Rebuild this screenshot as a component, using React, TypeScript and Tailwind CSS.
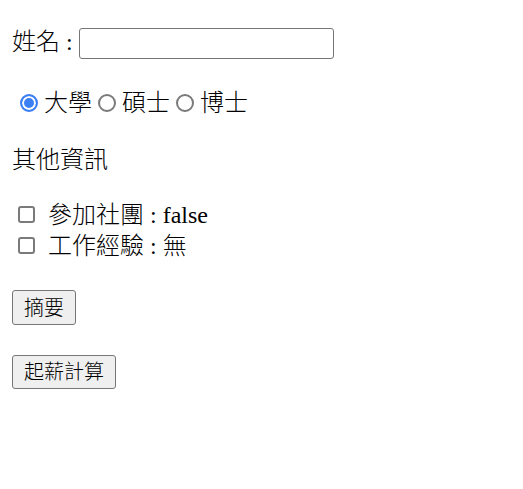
const App = () => {
  const font = 'font-["Liberation_Serif","Noto_Sans_CJK_TC",serif]';
  const radio =
    "h-[18px] w-[18px] appearance-none rounded-full border-2 border-[#7a7a7a] bg-white checked:border-[#3b7ff5] checked:bg-[#3b7ff5] checked:shadow-[inset_0_0_0_2px_white]";
  const checkbox = "ml-[6px] mr-[13px] h-[17px] w-[17px] appearance-none rounded-[3px] border-2 border-[#7a7a7a] bg-white";

  return (
    <div className={`${font} flex flex-col items-start px-[12px] text-[24px] text-black font-light`}>
      {/* 姓名 */}
      <div className="mt-[28px] flex h-[31px] items-center">
        <span className="-mt-[4px] leading-[24px]">姓名 :</span>
        <input
          type="text"
          className="ml-[6px] h-[31px] w-[255px] rounded-[3px] border-[1.5px] border-[#767676] bg-white px-[3px] text-[20px]"
        />
      </div>

      {/* 學歷 */}
      <div className="mt-[32px] flex h-[24px] items-center leading-[24px]">
        <input type="radio" name="degree" defaultChecked className={`ml-[8px] mr-[6px] ${radio}`} />
        <span>大學</span>
        <input type="radio" name="degree" className={`ml-[6px] mr-[6px] ${radio}`} />
        <span>碩士</span>
        <input type="radio" name="degree" className={`ml-[6px] mr-[6px] ${radio}`} />
        <span>博士</span>
      </div>

      <div className="mt-[33px] h-[24px] leading-[24px]">其他資訊</div>

      <div className="mt-[27px] flex h-[31px] items-center leading-[24px]">
        <input type="checkbox" className={checkbox} />
        <span>參加社團 : false</span>
      </div>
      <div className="flex h-[31px] items-center leading-[24px]">
        <input type="checkbox" className={checkbox} />
        <span>工作經驗 : 無</span>
      </div>

      <button className="mt-[29px] h-[35px] rounded-[3px] border-[1.5px] border-[#767676] bg-[#efefef] px-[11px] text-[20px] leading-[24px]">
        摘要
      </button>
      <button className="mt-[30px] h-[34px] rounded-[3px] border-[1.5px] border-[#767676] bg-[#efefef] px-[11px] text-[20px] leading-[24px]">
        起薪計算
      </button>
    </div>
  );
};

export default App;
